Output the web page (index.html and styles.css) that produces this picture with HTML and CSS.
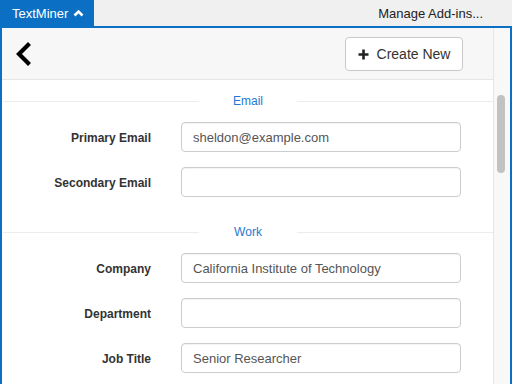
FILE: index.html
```html
<!DOCTYPE html>
<html lang="en">
<head>
  <meta charset="UTF-8">
  <title>TextMiner</title>
  <link rel="stylesheet" href="styles.css">
</head>
<body>
  <div class="topbar">
    <div class="addin-tab">
      TextMiner
      <svg class="tab-caret" width="11" height="8" viewBox="0 0 11 8">
        <polyline points="1.5,6.5 5.5,2.5 9.5,6.5" fill="none" stroke="#fff" stroke-width="2.6"/>
      </svg>
    </div>
    <div class="manage">Manage Add-ins...</div>
  </div>

  <div class="frame">
    <div class="pane">
      <div class="header">
        <a class="back" href="#">
          <svg width="18" height="24" viewBox="0 0 18 24">
            <polyline points="14,3 5,12 14,21" fill="none" stroke="#000" stroke-width="4.2" stroke-linecap="square"/>
          </svg>
        </a>
        <button class="create-btn">
          <svg width="11" height="11" viewBox="0 0 11 11">
            <path d="M5.5 0.5v10M0.5 5.5h10" stroke="#222" stroke-width="2.6"/>
          </svg>
          Create New
        </button>
      </div>

      <div class="section">
        <div class="section-title"><span>Email</span></div>
        <div class="row">
          <label class="row-label">Primary Email</label>
          <input class="field" type="text" value="sheldon@example.com">
        </div>
        <div class="row">
          <label class="row-label">Secondary Email</label>
          <input class="field" type="text" value="">
        </div>
      </div>

      <div class="section">
        <div class="section-title"><span>Work</span></div>
        <div class="row">
          <label class="row-label">Company</label>
          <input class="field" type="text" value="California Institute of Technology">
        </div>
        <div class="row">
          <label class="row-label">Department</label>
          <input class="field" type="text" value="">
        </div>
        <div class="row">
          <label class="row-label">Job Title</label>
          <input class="field" type="text" value="Senior Researcher">
        </div>
      </div>
    </div>

    <div class="scrollbar">
      <div class="thumb"></div>
    </div>
  </div>
</body>
</html>
```

FILE: styles.css
```css
:root {
  --office-blue: #0b6fc4;
  --link-blue: #2479d2;
  --label: #333;
  --field-border: #ccc;
}
html, body {
  margin: 0;
  padding: 0;
  height: 100%;
  overflow: hidden;
  font-family: 'Liberation Sans', Arial, sans-serif;
  background: #fff;
}

/* Office task pane chrome */
.topbar {
  height: 26px;
  background: #f0f0f0;
  display: flex;
  justify-content: space-between;
  align-items: stretch;
}
.addin-tab {
  background: var(--office-blue);
  color: #fff;
  font-size: 13px;
  width: 94px;
  box-sizing: border-box;
  padding: 0 0 0 12px;
  display: flex;
  align-items: center;
  gap: 5px;
}
.tab-caret {
  margin-top: -1px;
}
.manage {
  font-size: 13px;
  color: #222;
  display: flex;
  align-items: center;
  padding-right: 29px;
}

.frame {
  border: 2px solid var(--office-blue);
  border-bottom: none;
  height: calc(100% - 28px);
  display: flex;
}
.pane {
  flex: 1;
  min-width: 0;
}

/* Header with back + create */
.header {
  height: 51px;
  background: #f7f7f7;
  border-bottom: 1px solid #e6e6e6;
  display: flex;
  align-items: center;
  justify-content: space-between;
  padding: 0 30px 0 12px;
}
.back {
  display: flex;
  margin-top: 1px;
}
.create-btn {
  height: 34px;
  width: 118px;
  background: #fff;
  border: 1px solid #c8c8c8;
  border-radius: 4px;
  font-family: inherit;
  font-size: 14px;
  color: #333;
  display: flex;
  align-items: center;
  justify-content: center;
  gap: 8px;
  padding: 0;
  margin-top: 1px;
}

/* Form sections */
.section {
  padding: 14px 0;
}
.section-title {
  height: 14px;
  margin-bottom: 14px;
  display: flex;
  align-items: center;
  margin-left: 1px;
}
.section-title::before,
.section-title::after {
  content: "";
  flex: 1;
  height: 1px;
  background: #ececec;
}
.section-title span {
  width: 98px;
  text-align: center;
  font-size: 12px;
  color: var(--link-blue);
}
.row {
  display: flex;
  align-items: center;
  margin-bottom: 15px;
}
.row:last-child {
  margin-bottom: 0;
}
.row-label {
  width: 149px;
  margin-right: 30px;
  padding-top: 2px;
  text-align: right;
  font-size: 12px;
  font-weight: 700;
  color: var(--label);
}
.field {
  width: 280px;
  height: 30px;
  box-sizing: border-box;
  border: 1px solid var(--field-border);
  border-radius: 4px;
  padding: 0 11px;
  font-family: inherit;
  font-size: 13px;
  color: #555;
  box-shadow: inset 0 1px 1px rgba(0,0,0,0.05);
  outline: none;
}

/* Scrollbar */
.scrollbar {
  width: 16px;
  border-left: 1px solid #e6e6e6;
  background: #f8f8f8;
}
.thumb {
  width: 8px;
  height: 78px;
  margin: 67px 0 0 3px;
  background: #c2c2c2;
  border-radius: 4px;
}
```
